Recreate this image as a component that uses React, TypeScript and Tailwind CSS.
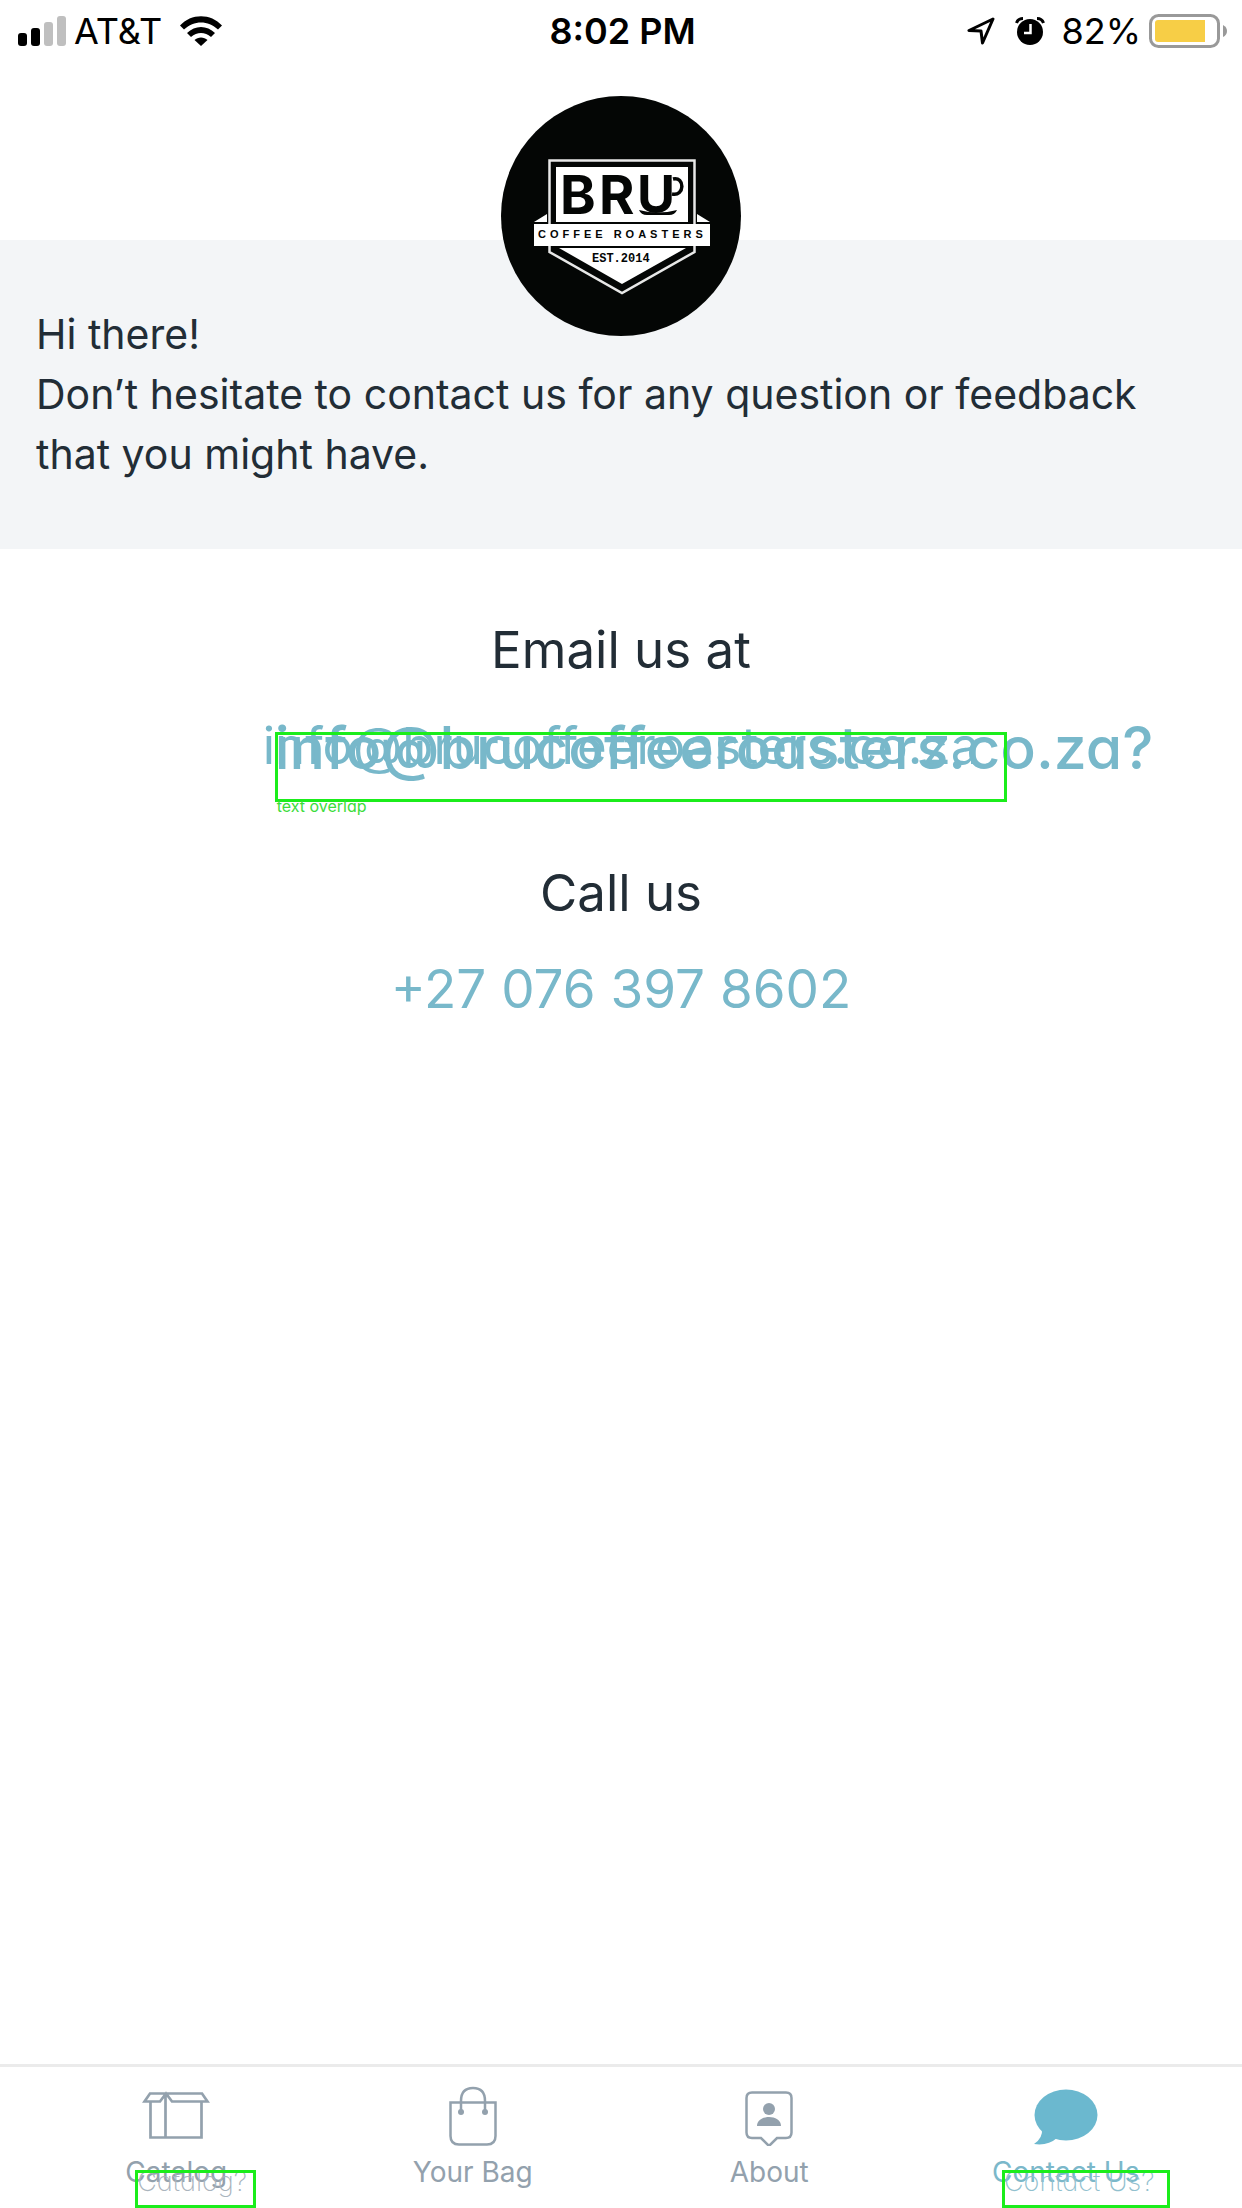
import React from "react";

const SINGLE_STOREY = "[font-feature-settings:'cv11','ss01']";

function StatusBar() {
  return (
    <header className="grid h-[62px] grid-cols-[1fr_auto_1fr] items-center pl-[18px] pr-[15px] text-4xl text-black">
      <div className="flex items-center">
        <svg className="h-[30px] w-12" viewBox="0 0 48 30" aria-hidden="true">
          <rect x="0" y="17" width="9" height="13" rx="3" />
          <rect x="13" y="12" width="9" height="18" rx="3" />
          <rect x="26" y="6" width="9" height="24" rx="3" fill="#bfbfbf" />
          <rect x="39" y="0" width="9" height="30" rx="3" fill="#bfbfbf" />
        </svg>
        <span className="ml-2">AT&amp;T</span>
        <svg className="ml-[18px] h-[30px] w-[42px]" viewBox="0 0 42 30" aria-hidden="true">
          <path d="M0 9.5C11-3 31-3 42 9.5L38 13.5C28 4 14 4 4 13.5Z" />
          <path d="M7 17C15 9 27 9 35 17L31 21C25 15.500 17 15.500 11 21Z" />
          <path d="M14.500 24C18 20.500 24 20.500 27.500 24L21 30Z" />
        </svg>
      </div>
      <span className="font-semibold">8:02 PM</span>
      <div className="flex items-center justify-end">
        <svg className="h-7 w-7" viewBox="0 0 28 28" fill="none" stroke="#000" strokeWidth="3" strokeLinejoin="round" aria-hidden="true">
          <path d="M26 2L2 13.500L14 14L15.500 26Z" />
        </svg>
        <svg className="ml-5 h-7 w-[30px]" viewBox="0 0 30 28" aria-hidden="true">
          <circle cx="15" cy="15" r="13" />
          <path d="M1.500 6Q3 1.500 8 1.500M28.500 6Q27 1.500 22 1.500" fill="none" stroke="#000" strokeWidth="3" />
          <path d="M15.500 7V16H9" fill="none" stroke="#fff" strokeWidth="2.500" />
        </svg>
        <span className="ml-4">82%</span>
        <svg className="ml-2 h-[34px] w-[78px]" viewBox="0 0 78 34" aria-hidden="true">
          <rect x="1.500" y="1.500" width="68" height="31" rx="8" fill="#fff" stroke="#999" strokeWidth="3" />
          <path d="M9 6H56V28H9Q6 28 6 25V9Q6 6 9 6Z" fill="#f7ce46" />
          <path d="M74 11Q78 13 78 17Q78 21 74 23Z" fill="#999" />
        </svg>
      </div>
    </header>
  );
}

function Logo() {
  return (
    <svg className="size-60" viewBox="0 0 240 240" role="img" aria-label="Bru Coffee Roasters">
      <circle cx="120" cy="120" r="120" fill="#040605" />
      <path d="M48.500 130V64.500H193.500V130M48.500 150V156L121 197L193.500 156V150" fill="none" stroke="#e8e8e8" strokeWidth="2.500" />
      <path d="M55 71H187V126H55ZM58 152H185L121 188ZM33 126L46 118V126ZM209 126L196 118V126Z" fill="#fff" />
      <rect x="33" y="128" width="176" height="22" fill="#fff" />
      <g fill="#040605">
        <text x="59" y="118" className="font-bold" fontSize="54">B</text>
        <text x="98" y="118" className="font-bold" fontSize="54">R</text>
        <text x="136" y="117" className="font-bold" fontSize="52">U</text>
        <path d="M138 114Q157 119 176 114Q174 119 168 119H146Q140 119 138 114Z" />
        <path d="M172 83C184 80 184 101 171 98" fill="none" stroke="#040605" strokeWidth="3.500" />
        <text x="37" y="142" className="font-[Liberation_Sans] font-bold" fontSize="11" letterSpacing="4">COFFEE ROASTERS</text>
        <text x="91" y="166" className="font-[Liberation_Mono] font-bold" fontSize="12">EST.2014</text>
      </g>
    </svg>
  );
}

function BoxIcon() {
  return (
    <svg className="h-[60px] w-[68px]" viewBox="0 0 68 60" fill="none" stroke="currentColor" strokeWidth="2.700" aria-hidden="true">
      <path d="M8.500 15V51.500H59.500V15M23.500 7V51.500M8 7.500H60L65.500 15.500H30L24 7.500L18 15.500H2.500Z" />
    </svg>
  );
}

function BagIcon() {
  return (
    <svg className="h-[60px] w-12" viewBox="0 0 48 60" fill="none" stroke="currentColor" strokeWidth="2.500" aria-hidden="true">
      <path d="M1.500 16.500H46.500V50Q46.500 58.500 38 58.500H10Q1.500 58.500 1.500 50ZM12 26V15Q12 2 24 2Q36 2 36 15V26" />
      <circle cx="12" cy="26" r="3" fill="currentColor" stroke="none" />
      <circle cx="36" cy="26" r="3" fill="currentColor" stroke="none" />
    </svg>
  );
}

function PersonIcon() {
  return (
    <svg className="h-[60px] w-12" viewBox="0 0 48 60" fill="none" stroke="currentColor" strokeWidth="2.500" aria-hidden="true">
      <path d="M7 6.500H41Q46.500 6.500 46.500 12V46.500Q46.500 52 41 52H32L24 60L16 52H7Q1.500 52 1.500 46.500V12Q1.500 6.500 7 6.500Z" />
      <circle cx="24" cy="23" r="6" fill="currentColor" stroke="none" />
      <path d="M12 40C12 28 36 28 36 40Z" fill="currentColor" stroke="none" />
    </svg>
  );
}

function ChatIcon() {
  return (
    <svg className="h-[60px] w-16" viewBox="0 0 64 60" fill="#6bb8cf" aria-hidden="true">
      <ellipse cx="32" cy="29" rx="31.500" ry="25.500" />
      <path d="M8 43Q9 52 0 58Q14 60 23 52Z" />
    </svg>
  );
}

type Mark = { text: string; box: string; label: string };

const tabs: { name: string; icon: () => React.JSX.Element; color: string; mark?: Mark }[] = [
  { name: "Catalog", icon: BoxIcon, color: "text-[#93a1ad]", mark: { text: "Catalog?", box: "left-2.5 w-[121px]", label: "text-[#aab4bd]" } },
  { name: "Your Bag", icon: BagIcon, color: "text-[#93a1ad]" },
  { name: "About", icon: PersonIcon, color: "text-[#93a1ad]" },
  { name: "Contact Us", icon: ChatIcon, color: "text-[#7bb8ca]", mark: { text: "Contact Us?", box: "left-2.5 w-[168px]", label: "text-[#91c0ce]" } },
];

export default function App() {
  return (
    <div className="flex min-h-screen flex-col overflow-hidden bg-white font-[Inter,sans-serif] text-[#222d36]">
      <StatusBar />
      <main className="flex-1">
        <div className="flex justify-center pt-[34px]">
          <div className="relative z-10 -mb-24">
            <Logo />
          </div>
        </div>
        <section className="bg-[#f3f5f7] px-9 pb-[65px] pt-16 text-[41px] leading-[60px]">
          <p>Hi there!</p>
          <p>Don’t hesitate to contact us for any question or feedback that you might have.</p>
        </section>
        <section className="flex flex-col items-center pt-[69px] text-[51px] leading-[64px]">
          <h2>Email us at</h2>
          <div className="relative mt-8">
            <a href="mailto:info@brucoffeeroasters.co.za" className="text-[#78b8ca]">info@brucoffeeroasters.co.za</a>
            <span className={"absolute left-3 top-0.5 whitespace-nowrap text-[59px] font-medium text-[#78b8ca] " + SINGLE_STOREY}>info@brucoffeeroasters.co.za?</span>
            <div className="absolute left-3 top-[18px] h-[70px] w-[732px] border-3 border-[#1bed1b]" />
            <span className={"absolute left-3.5 top-[82px] whitespace-nowrap text-base leading-5 text-[#3bdc3b] " + SINGLE_STOREY}>text overlap</span>
          </div>
        </section>
        <section className="mt-[83px] flex flex-col items-center text-[51px] leading-[64px]">
          <h2>Call us</h2>
          <a href="tel:+270763978602" className="mt-8 text-[53px] text-[#78b8ca]">+27 076 397 8602</a>
        </section>
      </main>
      <nav className="grid h-36 grid-cols-4 border-t-3 border-[#ebebeb] px-7 pt-[19px]">
        {tabs.map(({ name, icon: Icon, color, mark }) => (
          <a key={name} href="#" className={"flex flex-col items-center " + color}>
            <Icon />
            <span className="relative mt-2 whitespace-nowrap text-[28px] leading-9">
              {name}
              {mark && (
                <>
                  <span className={"absolute left-3 top-2.5 text-[27px] font-extralight " + mark.label + " " + SINGLE_STOREY} aria-hidden="true">{mark.text}</span>
                  <span className={"absolute top-4 h-[38px] border-3 border-[#1bed1b] " + mark.box} />
                </>
              )}
            </span>
          </a>
        ))}
      </nav>
    </div>
  );
}
